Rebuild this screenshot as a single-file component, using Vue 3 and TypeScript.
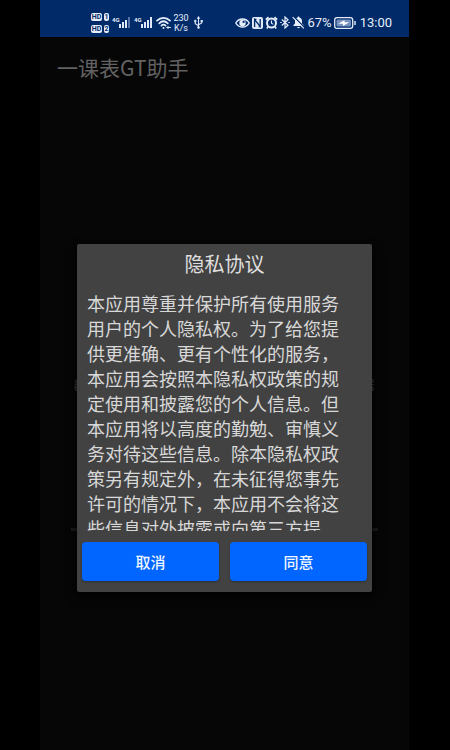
<script setup lang="ts">
import { ref } from 'vue'

const open = ref(true)
const sims: number[] = [1, 2]
const bars: number[] = [4, 6, 8, 11]
const policy =
  '本应用尊重并保护所有使用服务用户的个人隐私权。为了给您提供更准确、更有个性化的服务，本应用会按照本隐私权政策的规定使用和披露您的个人信息。但本应用将以高度的勤勉、审慎义务对待这些信息。除本隐私权政策另有规定外，在未征得您事先许可的情况下，本应用不会将这些信息对外披露或向第三方提'

function close(): void {
  open.value = false
}
</script>

<template>
  <div class="screen">
    <header class="status">
      <div class="group left">
        <div class="hd">
          <div v-for="n in sims" :key="n" class="hd-row">
            <span class="hd-label">HD</span>
            <span class="hd-sim">{{ n }}</span>
          </div>
        </div>
        <div v-for="n in sims" :key="n" class="signal">
          <span class="net">4G</span>
          <svg width="12" height="11" viewBox="0 0 12 11" aria-hidden="true">
            <rect
              v-for="(h, i) in bars"
              :key="i"
              :x="i * 3"
              :y="11 - h"
              width="2"
              :height="h"
              :fill="n === 1 && i === 3 ? '#5573a8' : '#dfe8f8'"
            />
          </svg>
        </div>
        <svg class="wifi" width="16" height="14" viewBox="0 0 16 14" fill="none" stroke="#e6eefb" stroke-width="1.7" stroke-linecap="round" aria-hidden="true">
          <path d="M1 4.7C4.8 1 10.2 1 14 4.7" />
          <path d="M3.2 7.3C5.9 4.7 9.1 4.7 11.8 7.3" />
          <path d="M5.4 9.7C6.8 8.4 8.2 8.4 9.6 9.7" />
          <circle cx="7.5" cy="12" r="1" fill="#e6eefb" stroke="none" />
          <path d="M11 11.5H14.5M12.2 10.3L11 11.5L12.2 12.7" stroke-width="1" />
        </svg>
        <div class="speed"><span>230</span><span>K/s</span></div>
        <svg class="usb" width="9" height="13" viewBox="0 0 9 13" fill="none" stroke="#dfe8f8" stroke-width="1.1" aria-hidden="true">
          <path d="M4.5 2V11M4.5 9.7L1.3 7.6V5.2M4.5 8.8L7.7 7V5.2" />
          <path d="M4.5 0L6.3 2.8H2.7Z" fill="#dfe8f8" stroke="none" />
          <circle cx="4.5" cy="11.5" r="1.3" fill="#dfe8f8" stroke="none" />
          <circle cx="1.3" cy="5" r="1.2" fill="#dfe8f8" stroke="none" />
          <path d="M6.6 4H8.8V6.2H6.6Z" fill="#dfe8f8" stroke="none" />
        </svg>
      </div>
      <div class="group right">
        <svg width="15" height="12" viewBox="0 0 15 12" aria-hidden="true">
          <path d="M.8 6C3.8 .6 11.2 .6 14.2 6C11.2 11.4 3.8 11.4 .8 6Z" fill="none" stroke="#e6eefb" stroke-width="1.4" />
          <circle cx="7.5" cy="6" r="3.2" fill="#e6eefb" />
          <circle cx="8.6" cy="4.9" r="1.1" fill="#002a68" />
        </svg>
        <svg width="11" height="12" viewBox="0 0 11 12" aria-hidden="true">
          <rect width="11" height="12" rx="2" fill="#dfe8f8" />
          <path d="M2.6 10V2.6L8.2 9.4V2M2.6 2.6L4.4 2.2M8.2 9.4L6.6 9.8" fill="none" stroke="#002a68" stroke-width="1.3" />
        </svg>
        <svg width="13" height="13" viewBox="0 0 13 13" fill="none" stroke="#e6eefb" aria-hidden="true">
          <circle cx="6.5" cy="7" r="4.5" stroke-width="2" />
          <path d="M.8 3.6L3.6 1.2M12.2 3.6L9.4 1.2" stroke-width="1.9" />
          <path d="M6.5 4.5V7.3L8.3 8.4" stroke-width="1.1" />
          <path d="M3 10.8L1.8 12.4M10 10.8L11.2 12.4" stroke-width="1.6" />
        </svg>
        <svg width="10" height="13" viewBox="0 0 10 13" fill="none" stroke="#e6eefb" stroke-width="1.2" aria-hidden="true">
          <path d="M1.8 3.5L8 9.2L5 12V1L8 3.8L1.8 9.5" />
          <path d="M.2 6.5H1.7M8.3 6.5H9.8" />
        </svg>
        <svg width="13" height="13" viewBox="0 0 13 13" aria-hidden="true">
          <path d="M1.5 10V9L3 7.5V5.2C3 3.2 4 2 5.6 1.6C5.6 .2 7.4 .2 7.4 1.6C9 2 10 3.2 10 5.2V7.5L11.5 9V10Z" fill="#e6eefb" />
          <path d="M5 11H8C7.6 12.5 5.4 12.5 5 11Z" fill="#e6eefb" />
          <path d="M1.6 .5L12.6 11.5" stroke="#002a68" stroke-width="1.4" />
          <path d="M.7 1.1L11.8 12.3" stroke="#e6eefb" stroke-width="1.2" />
        </svg>
        <span class="battery-text">67%</span>
        <svg class="battery" width="22" height="12" viewBox="0 0 22 12" aria-hidden="true">
          <rect x=".7" y=".7" width="18" height="10.6" rx="2.4" fill="none" stroke="#e6eefb" stroke-width="1.3" />
          <rect x="2.5" y="2.5" width="14.4" height="7" rx="1" fill="#7892bf" />
          <path d="M4.4 6.8L10.5 2.9V5.2H15.2L9 9.1V6.8Z" fill="#fff" />
          <path d="M21 4V8" stroke="#e6eefb" stroke-width="1.4" />
        </svg>
        <time class="clock">13:00</time>
      </div>
    </header>

    <main class="page">
      <h1 class="app-title">一课表GT助手</h1>
      <div class="hint" aria-hidden="true">
        <svg width="4" height="14" viewBox="0 0 4 14" fill="none" stroke="#414141">
          <path d="M3 1L1 4H4M3 4L1 7H4M0 9.5H4M2 7V13M1 12H4" />
        </svg>
        <svg width="4" height="14" viewBox="0 0 4 14" fill="none" stroke="#414141">
          <path d="M0 1.5H2V4.5H0M0 6.5H3M0 9H2V12.5H0M0 11H2" />
        </svg>
      </div>
      <div class="rule"></div>
    </main>

    <div v-if="open" class="overlay">
      <section class="dialog" role="dialog" aria-modal="true" aria-labelledby="policy-title">
        <h2 id="policy-title" class="dialog-title">隐私协议</h2>
        <div class="policy">
          <p>{{ policy }}</p>
        </div>
        <div class="actions">
          <button type="button" @click="close">取消</button>
          <button type="button" @click="close">同意</button>
        </div>
      </section>
    </div>
  </div>
</template>

<style>
body {
  margin: 0;
  background: #000;
}
</style>

<style scoped>
.screen {
  position: relative;
  min-height: 100vh;
  margin: 0 41px 0 40px;
  background: #060606;
  font-family: "Noto Sans CJK SC", sans-serif;
}

.status {
  display: flex;
  justify-content: space-between;
  align-items: center;
  box-sizing: border-box;
  height: 37px;
  padding: 8px 17px 0 51px;
  background: #002a68;
  color: #e6eefb;
  font-family: Roboto, sans-serif;
}

.group,
.signal,
.hd-row {
  display: flex;
  align-items: center;
}

.group svg {
  flex: none;
}

.hd {
  display: grid;
  gap: 4px;
}

.hd-row {
  gap: 2px;
}

.hd-label,
.hd-sim {
  border-radius: 2px;
  background: #e6eefb;
  color: #002a68;
  font-size: 7px;
  font-weight: 700;
  line-height: 8px;
  text-align: center;
}

.hd-label {
  width: 11px;
}

.hd-sim {
  width: 5px;
}

.signal {
  align-items: flex-start;
  margin-left: 3px;
}

.net {
  width: 7px;
  font-size: 6px;
  font-weight: 700;
  line-height: 5px;
}

.wifi {
  margin-left: 3px;
}

.speed {
  display: grid;
  width: 16px;
  margin-left: 1px;
  font-size: 9px;
  line-height: 10px;
  text-align: center;
}

.usb {
  margin-left: 5px;
}

.right {
  gap: 2px;
}

.battery-text,
.clock {
  font-size: 13px;
  line-height: 16px;
}

.battery {
  margin-right: 2px;
}

.page {
  padding: 15px 17px 0;
}

.app-title {
  margin: 0;
  color: #626262;
  font-size: 21px;
  font-weight: 400;
  line-height: 30px;
}

.hint {
  display: flex;
  justify-content: space-between;
  margin: 296px 17px 0 17px;
}

.rule {
  height: 3px;
  margin: 136px 14px 0;
  background: #1c1c1c;
}

.overlay {
  position: absolute;
  inset: 0;
  padding: 244px 37px 0;
}

.dialog {
  padding: 5px 5px 11px;
  border-radius: 2px;
  background: #424242;
  box-shadow: 0 4px 12px #000;
}

.dialog-title {
  margin: 0;
  color: #dedede;
  font-size: 20px;
  font-weight: 400;
  line-height: 30px;
  text-align: center;
}

.policy {
  height: 240px;
  margin: 12px 5px 11px;
  overflow: hidden;
}

.policy p {
  margin: 0;
  padding-right: 22px;
  color: #d8d8d8;
  font-size: 18px;
  line-height: 25px;
}

.actions {
  display: grid;
  grid-template-columns: 1fr 1fr;
  gap: 11px;
}

.actions button {
  height: 39px;
  padding: 0;
  border: 0;
  border-radius: 4px;
  background: #0066ff;
  box-shadow: 0 1px 2px #303030;
  color: #f0f6ff;
  font-family: inherit;
  font-size: 15px;
  font-weight: 500;
  line-height: 20px;
}
</style>
